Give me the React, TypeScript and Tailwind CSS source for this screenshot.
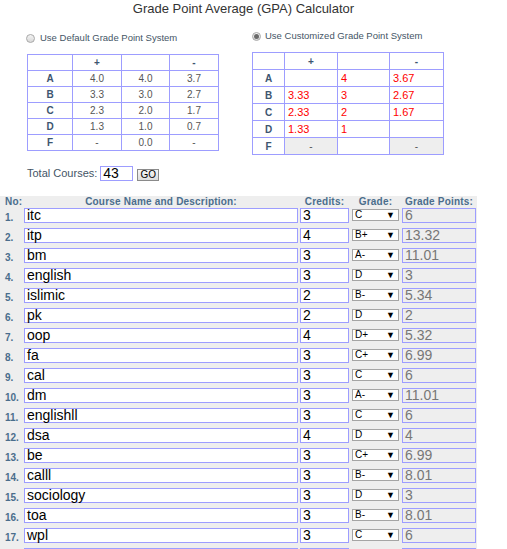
import React from "react";

const defaultRows = [
  ["A", "4.0", "4.0", "3.7"],
  ["B", "3.3", "3.0", "2.7"],
  ["C", "2.3", "2.0", "1.7"],
  ["D", "1.3", "1.0", "0.7"],
  ["F", "-", "0.0", "-"],
];

const customRows = [
  ["A", "", "4", "3.67"],
  ["B", "3.33", "3", "2.67"],
  ["C", "2.33", "2", "1.67"],
  ["D", "1.33", "1", ""],
];

const courses = [
  ["itc", "3", "C", "6"],
  ["itp", "4", "B+", "13.32"],
  ["bm", "3", "A-", "11.01"],
  ["english", "3", "D", "3"],
  ["islimic", "2", "B-", "5.34"],
  ["pk", "2", "D", "2"],
  ["oop", "4", "D+", "5.32"],
  ["fa", "3", "C+", "6.99"],
  ["cal", "3", "C", "6"],
  ["dm", "3", "A-", "11.01"],
  ["englishll", "3", "C", "6"],
  ["dsa", "4", "D", "4"],
  ["be", "3", "C+", "6.99"],
  ["calll", "3", "B-", "8.01"],
  ["sociology", "3", "D", "3"],
  ["toa", "3", "B-", "8.01"],
  ["wpl", "3", "C", "6"],
  ["", "", "", ""],
];

function Radio({ checked }: { checked?: boolean }) {
  return (
    <span className="w-[9px] h-[9px] rounded-full border border-[#a8a8a8] bg-gradient-to-b from-[#f4f4f4] to-[#d8d8d8] flex items-center justify-center">
      {checked && <span className="w-[5px] h-[5px] rounded-full bg-[#6a6a6a]" />}
    </span>
  );
}

export default function App() {
  return (
    <div className="w-[507px] h-[549px] overflow-hidden bg-white font-['Liberation_Sans',Arial,sans-serif]">
      {/* Title */}
      <h1 className="text-center text-[13px] leading-[18px] text-[#333] pr-[20px]">
        Grade Point Average (GPA) Calculator
      </h1>

      {/* Grade systems */}
      <div className="flex items-start">
        <div className="ml-[27px] w-[191px]">
          <div className="mt-[14px] h-[12px] flex items-center -ml-[1px] gap-[5px] text-[9.5px] text-[#445566]">
            <Radio />
            <span>Use Default Grade Point System</span>
          </div>
          <table className="mt-[10px] w-[191px] border-collapse text-[10px] text-[#555] table-fixed">
            <colgroup>
              <col className="w-[45px]" />
              <col className="w-[49px]" />
              <col className="w-[48px]" />
              <col className="w-[49px]" />
            </colgroup>
            <tbody>
              <tr className="h-[16px]">
                <td className="border border-[#9d9dff]" />
                <td className="border border-[#9d9dff] text-center font-bold text-[#3d5570]">+</td>
                <td className="border border-[#9d9dff]" />
                <td className="border border-[#9d9dff] text-center font-bold text-[#3d5570]">-</td>
              </tr>
              {defaultRows.map((r) => (
                <tr key={r[0]} className="h-[16px]">
                  <td className="border border-[#9d9dff] text-center font-bold text-[#3d5570]">{r[0]}</td>
                  <td className="border border-[#9d9dff] text-center">{r[1]}</td>
                  <td className="border border-[#9d9dff] text-center">{r[2]}</td>
                  <td className="border border-[#9d9dff] text-center">{r[3]}</td>
                </tr>
              ))}
            </tbody>
          </table>
        </div>

        <div className="ml-[34px] w-[191px]">
          <div className="mt-[12px] h-[12px] flex items-center gap-[4px] text-[9.5px] text-[#445566]">
            <Radio checked />
            <span>Use Customized Grade Point System</span>
          </div>
          <table className="mt-[10px] w-[191px] border-collapse text-[11px] leading-[13px] text-[#ff0000] table-fixed">
            <colgroup>
              <col className="w-[32px]" />
              <col className="w-[53px]" />
              <col className="w-[52px]" />
              <col className="w-[54px]" />
            </colgroup>
            <tbody>
              <tr className="h-[17px]">
                <td className="border border-[#9d9dff]" />
                <td className="border border-[#9d9dff] text-center text-[10px] font-bold text-[#3d5570]">+</td>
                <td className="border border-[#9d9dff]" />
                <td className="border border-[#9d9dff] text-center text-[10px] font-bold text-[#3d5570]">-</td>
              </tr>
              {customRows.map((r) => (
                <tr key={r[0]} className="h-[17px]">
                  <td className="border border-[#9d9dff] text-center text-[10px] font-bold text-[#3d5570]">{r[0]}</td>
                  <td className="border border-[#9d9dff] pl-[3px]">{r[1]}</td>
                  <td className="border border-[#9d9dff] pl-[3px]">{r[2]}</td>
                  <td className="border border-[#9d9dff] pl-[3px]">{r[3]}</td>
                </tr>
              ))}
              <tr className="h-[17px]">
                <td className="border border-[#9d9dff] text-center text-[10px] font-bold text-[#3d5570]">F</td>
                <td className="border border-[#9d9dff] bg-[#eeeeee] text-center text-[10px] text-[#555]">-</td>
                <td className="border border-[#9d9dff]" />
                <td className="border border-[#9d9dff] bg-[#eeeeee] text-center text-[10px] text-[#555]">-</td>
              </tr>
            </tbody>
          </table>
        </div>
      </div>

      {/* Total courses */}
      <div className="mt-[11px] ml-[27px] h-[15px] flex items-center text-[11px] text-[#445566]">
        <span>Total Courses:</span>
        <div className="ml-[3px] w-[33px] h-[15px] border border-[#9d9dff] pl-[2px] text-[14px] leading-[13px] text-black">
          43
        </div>
        <div className="ml-[4px] mt-[3px] w-[22px] h-[12px] border border-[#8a8a8a] bg-gradient-to-b from-[#f6f6f6] to-[#dddddd] text-[10px] leading-[10px] text-black flex items-center justify-center">
          GO
        </div>
      </div>

      {/* Courses */}
      <div className="mt-[15px] w-[477px] bg-[#eeeeee]">
        <div className="h-[12px] flex text-[10px] leading-[12px] font-bold text-[#4a6d8c] tracking-[0.2px]">
          <div className="w-[24px] pl-[5px]">No:</div>
          <div className="w-[274px] text-center">Course Name and Description:</div>
          <div className="ml-[2px] w-[49px] text-center">Credits:</div>
          <div className="ml-[3px] w-[47px] text-center">Grade:</div>
          <div className="ml-[3px] w-[74px] text-center">Grade Points:</div>
        </div>
        {courses.map((c, i) => (
          <div key={i} className="h-[20px] flex items-start">
            <div className="w-[24px] pl-[5px] pt-[4px] text-[10px] leading-[12px] font-bold text-[#4a6d8c]">
              {c[0] ? `${i + 1}.` : ""}
            </div>
            <div className="w-[274px] h-[15px] border border-[#9d9dff] bg-white pl-[2px] text-[14px] leading-[13px] text-black">
              {c[0]}
            </div>
            <div className="ml-[2px] w-[49px] h-[15px] border border-[#9d9dff] bg-white pl-[2px] text-[14px] leading-[13px] text-black">
              {c[1]}
            </div>
            <div className="ml-[3px] mt-[1px] w-[47px] h-[12px] border border-[#a5a5a5] bg-white pl-[2px] pr-[3px] flex items-center justify-between text-[10px] leading-[10px] text-black">
              <span>{c[2]}</span>
              <span className="text-[9px]">{c[0] ? "▼" : ""}</span>
            </div>
            <div className="ml-[3px] w-[74px] h-[15px] border border-[#9d9dff] bg-[#eeeeee] pl-[2px] text-[14px] leading-[13px] text-[#777]">
              {c[3]}
            </div>
          </div>
        ))}
      </div>
    </div>
  );
}
